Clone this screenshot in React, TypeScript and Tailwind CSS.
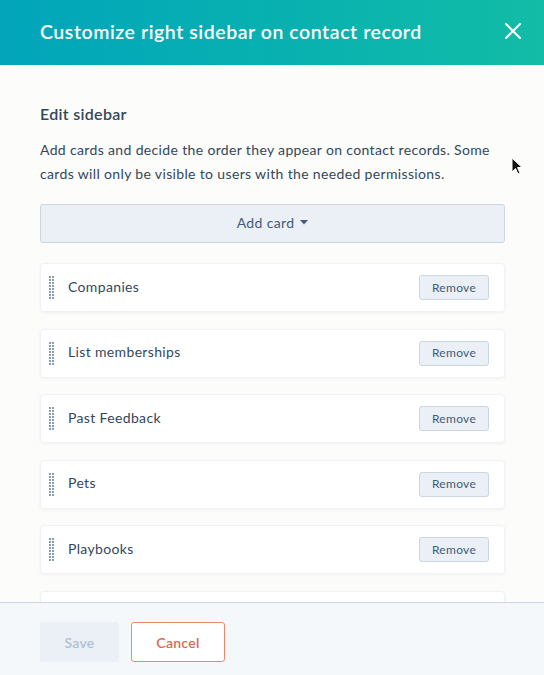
import React from "react";

const items = ["Companies", "List memberships", "Past Feedback", "Pets", "Playbooks", ""];

function Handle() {
  const dots = [];
  for (let r = 0; r < 8; r++) {
    for (let c = 0; c < 2; c++) {
      dots.push(<circle key={`${r}-${c}`} cx={1 + c * 3} cy={1 + r * 3} r={0.9} fill="#516f90" />);
    }
  }
  return (
    <svg width="5" height="23" viewBox="0 0 5 23" className="shrink-0">
      {dots}
    </svg>
  );
}

export default function App() {
  return (
    <div
      className="relative flex h-[675px] w-[544px] flex-col overflow-hidden bg-[#fcfcfa] text-[#33475b]"
      style={{ fontFamily: "Lato, 'Open Sans', sans-serif" }}
    >
      <div className="flex h-[65px] shrink-0 items-center justify-between bg-gradient-to-r from-[#02a5ba] to-[#12bca6] pb-[2px] pl-10 pr-[22px]">
        <h1 className="text-[19.5px] font-semibold tracking-[0.55px] text-white">Customize right sidebar on contact record</h1>
        <svg width="18" height="18" viewBox="0 0 18 18" className="mb-[1px]">
          <path d="M2 2 L16 16 M16 2 L2 16" stroke="white" strokeWidth="2" strokeLinecap="round" />
        </svg>
      </div>

      <div className="flex-1 overflow-hidden pl-10 pr-[39px] pt-[37px]">
        <h2 className="text-[16px] font-semibold leading-6 tracking-[0.3px] text-[#33475b]">Edit sidebar</h2>
        <p className="mt-[12px] text-[14px] leading-6 tracking-[0.35px] text-[#33475b]">
          Add cards and decide the order they appear on contact records. Some cards will only be visible to users with the needed permissions.
        </p>
        <button className="mt-[18px] flex h-[39px] w-full items-center justify-center gap-[6px] rounded-[3px] border border-[#cbd6e2] bg-[#eaf0f6] pb-[2px] text-[14px] tracking-[0.35px] text-[#425b76]">
          Add card
          <svg width="8" height="5" viewBox="0 0 8 5">
            <path d="M0 0 L8 0 L4 4.5 Z" fill="#425b76" />
          </svg>
        </button>
        <div className="mt-[20px] flex flex-col gap-[16.5px]">
          {items.map((name, i) => (
            <div
              key={i}
              className="flex h-[49px] shrink-0 items-center rounded-[4px] border border-[#f0f3f6] bg-white pl-[8px] pr-[15px] shadow-[0_1px_3px_rgba(45,62,80,0.06)]"
            >
              {name && (
                <>
                  <Handle />
                  <span className="mb-[3px] ml-[14px] flex-1 text-[14px] tracking-[0.35px] text-[#33475b]">{name}</span>
                  <button className="flex h-[25px] w-[70px] items-center justify-center rounded-[3px] border border-[#cbd6e2] bg-[#eaf0f6] text-[12px] tracking-[0.3px] text-[#425b76]">
                    Remove
                  </button>
                </>
              )}
            </div>
          ))}
        </div>
      </div>

      <div className="flex h-[73px] shrink-0 items-start gap-3 border-t border-[#cbd6e2] bg-[#f5f8fa] px-10 pt-[19px]">
        <button className="flex h-[40px] w-[79px] items-center justify-center rounded-[3px] border border-[#eaf0f6] bg-[#eaf0f6] text-[14px] font-semibold tracking-[0.3px] text-[#b0c1d4]">
          Save
        </button>
        <button className="flex h-[40px] w-[94px] items-center justify-center rounded-[3px] border border-[#e68a72] bg-white text-[14px] font-semibold tracking-[0.3px] text-[#d9694e]">
          Cancel
        </button>
      </div>

      <svg className="absolute left-[511px] top-[157px]" width="12" height="19" viewBox="0 0 12 19">
        <path d="M1 1 L1 15 L4.5 11.5 L7 17 L9 16 L6.5 10.5 L11 10.5 Z" fill="#111" stroke="white" strokeWidth="1" />
      </svg>
    </div>
  );
}
